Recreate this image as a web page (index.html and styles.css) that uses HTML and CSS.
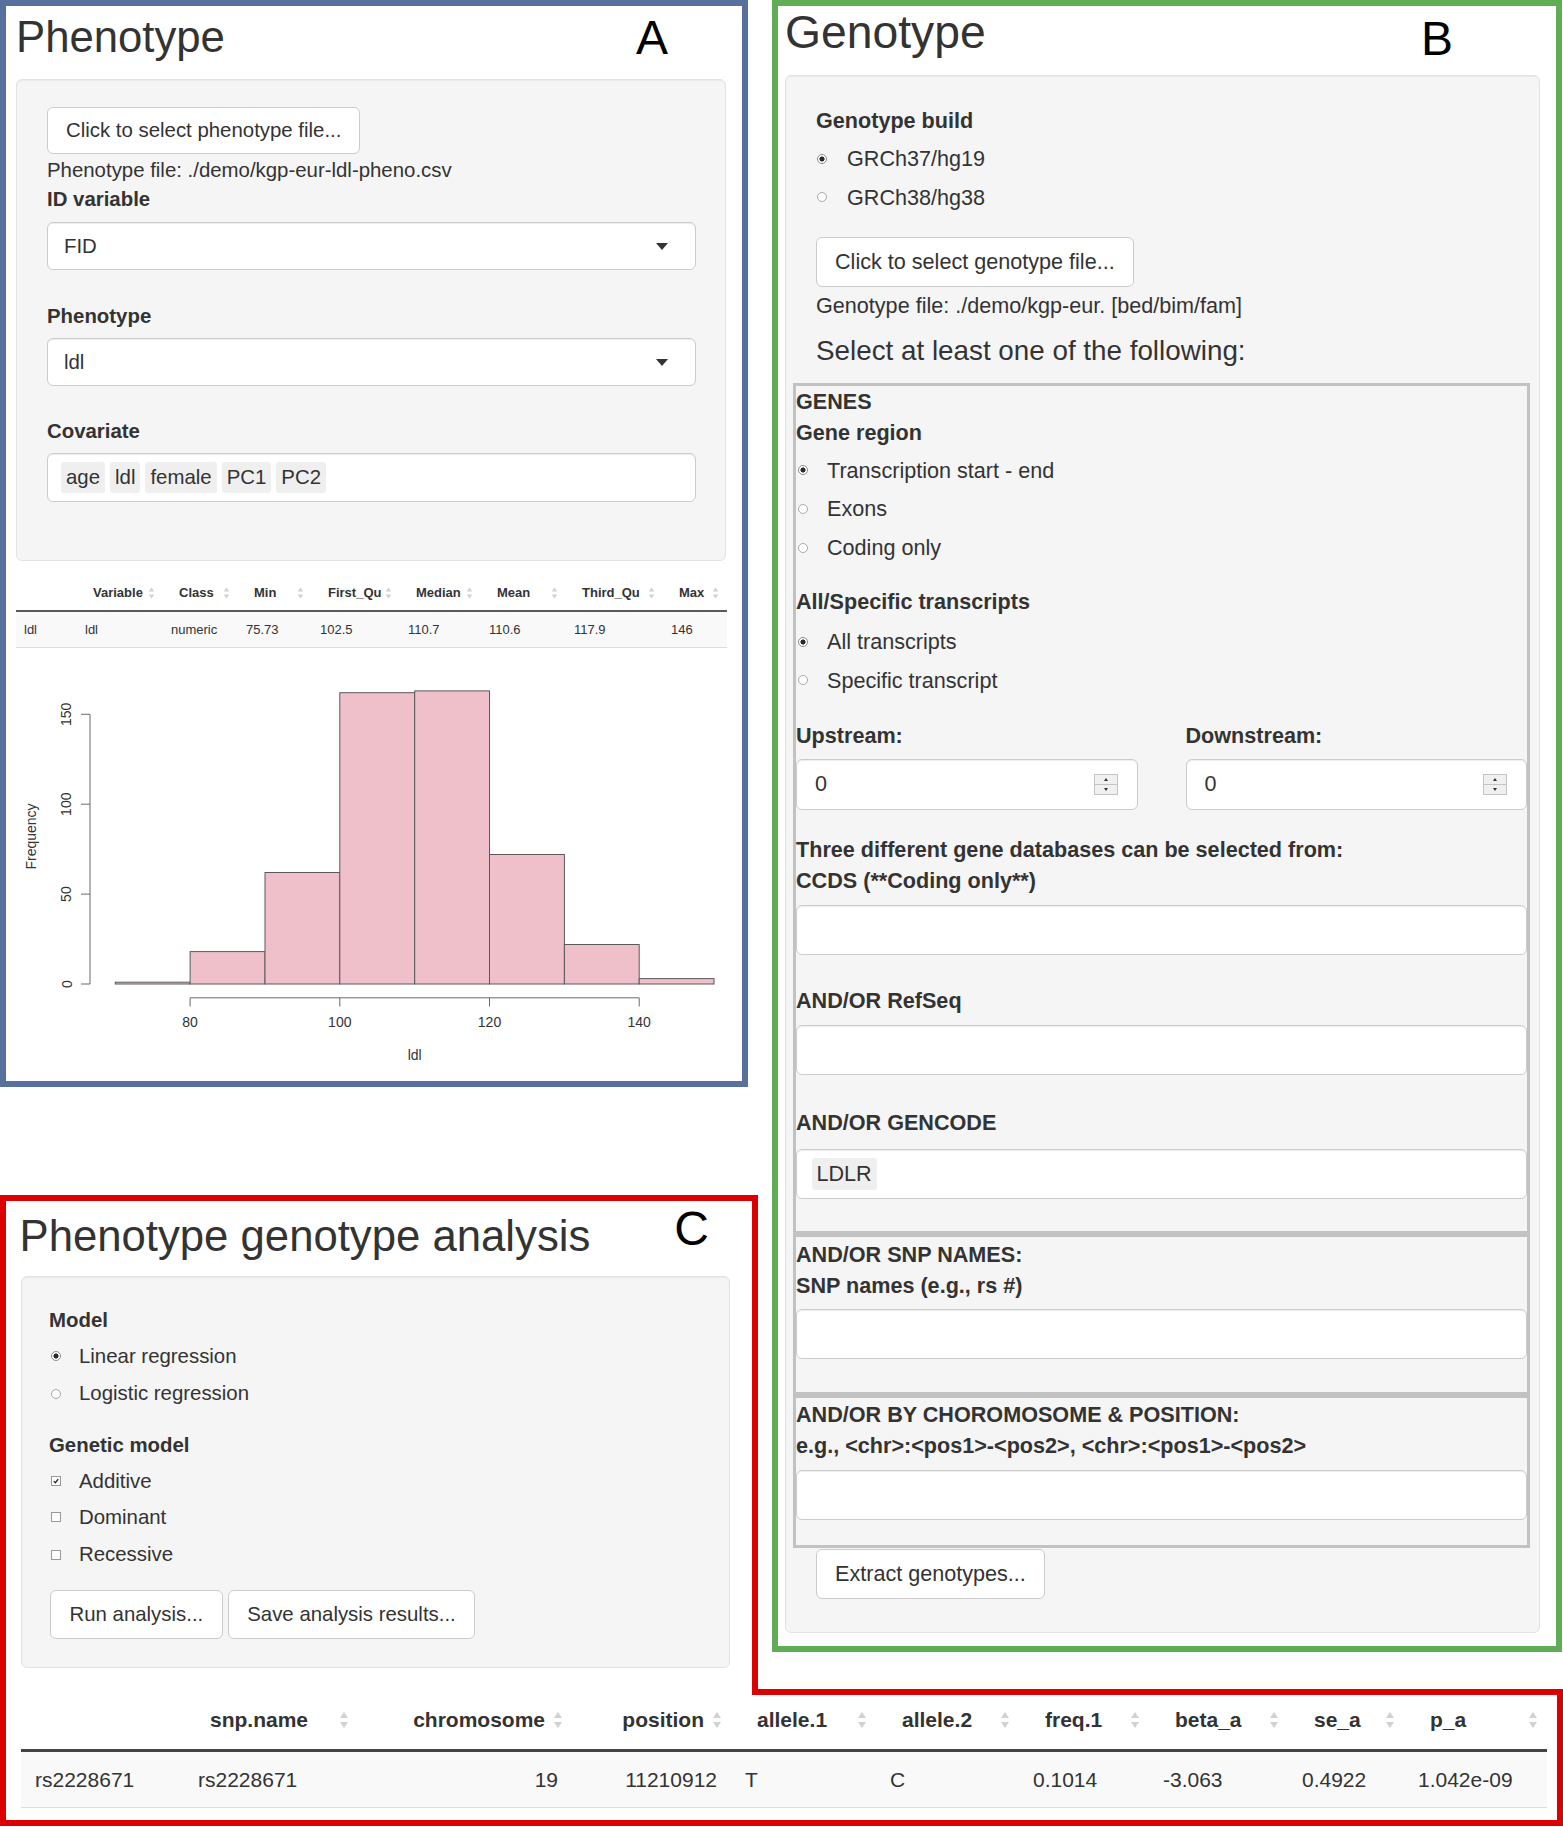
FILE: index.html
```html
<!DOCTYPE html>
<html>
<head>
<meta charset="utf-8">
<title>Phenotype genotype</title>
<link rel="stylesheet" href="styles.css">
</head>
<body>
<div class="page">
  <div class="upper">
    <div class="left-col">
      <section class="panel-a">
        <div class="head">
          <h2 class="title title-a">Phenotype</h2>
          <span class="mark mark-a">A</span>
        </div>
        <div class="well well-a">
          <button class="btn btn-a">Click to select phenotype file...</button>
          <div class="line-a file-a">Phenotype file: ./demo/kgp-eur-ldl-pheno.csv</div>
          <div class="line-a lbl">ID variable</div>
          <div class="select sel-1"><span>FID</span><span class="caret"></span></div>
          <div class="line-a lbl lbl-pheno">Phenotype</div>
          <div class="select sel-2"><span>ldl</span><span class="caret"></span></div>
          <div class="line-a lbl lbl-cov">Covariate</div>
          <div class="selectize">
            <span class="chip">age</span><span class="chip">ldl</span><span class="chip">female</span><span class="chip">PC1</span><span class="chip">PC2</span>
          </div>
        </div>
        <table class="stats">
          <colgroup>
            <col class="sc0"><col class="sc1"><col class="sc2"><col class="sc3"><col class="sc4"><col class="sc5"><col class="sc6"><col class="sc7"><col class="sc8">
          </colgroup>
          <thead>
            <tr>
              <th></th>
              <th><div class="th-in"><span>Variable</span><svg class="sort-a" viewBox="0 0 10 20"><path d="M5 2L9 8H1Z"/><path d="M5 18L9 12H1Z"/></svg></div></th>
              <th><div class="th-in"><span>Class</span><svg class="sort-a" viewBox="0 0 10 20"><path d="M5 2L9 8H1Z"/><path d="M5 18L9 12H1Z"/></svg></div></th>
              <th><div class="th-in"><span>Min</span><svg class="sort-a" viewBox="0 0 10 20"><path d="M5 2L9 8H1Z"/><path d="M5 18L9 12H1Z"/></svg></div></th>
              <th><div class="th-in"><span>First_Qu</span><svg class="sort-a" viewBox="0 0 10 20"><path d="M5 2L9 8H1Z"/><path d="M5 18L9 12H1Z"/></svg></div></th>
              <th><div class="th-in"><span>Median</span><svg class="sort-a" viewBox="0 0 10 20"><path d="M5 2L9 8H1Z"/><path d="M5 18L9 12H1Z"/></svg></div></th>
              <th><div class="th-in"><span>Mean</span><svg class="sort-a" viewBox="0 0 10 20"><path d="M5 2L9 8H1Z"/><path d="M5 18L9 12H1Z"/></svg></div></th>
              <th><div class="th-in"><span>Third_Qu</span><svg class="sort-a" viewBox="0 0 10 20"><path d="M5 2L9 8H1Z"/><path d="M5 18L9 12H1Z"/></svg></div></th>
              <th><div class="th-in"><span>Max</span><svg class="sort-a" viewBox="0 0 10 20"><path d="M5 2L9 8H1Z"/><path d="M5 18L9 12H1Z"/></svg></div></th>
            </tr>
          </thead>
          <tbody>
            <tr><td>ldl</td><td>ldl</td><td>numeric</td><td>75.73</td><td>102.5</td><td>110.7</td><td>110.6</td><td>117.9</td><td>146</td></tr>
          </tbody>
        </table>
        <svg class="hist" width="736" height="432.5" viewBox="6 647.5 736 432.5">
          <g class="bars">
            <rect x="115.3" y="981.7" width="74.8" height="1.8"/>
            <rect x="190.1" y="951.1" width="74.9" height="32.4"/>
            <rect x="265" y="872" width="74.8" height="111.5"/>
            <rect x="339.8" y="692.2" width="74.9" height="291.3"/>
            <rect x="414.7" y="690.4" width="74.8" height="293.1"/>
            <rect x="489.5" y="854" width="74.9" height="129.5"/>
            <rect x="564.4" y="944" width="74.8" height="39.5"/>
            <rect x="639.2" y="978.1" width="74.8" height="5.4"/>
          </g>
          <g class="axis">
            <path d="M90 983.5V713.8M81 983.5H90M81 893.6H90M81 803.7H90M81 713.8H90"/>
            <path d="M190.1 997.3H639.2M190.1 997.3V1006M339.8 997.3V1006M489.5 997.3V1006M639.2 997.3V1006"/>
          </g>
          <g class="labels">
            <text x="71.5" y="983.5" transform="rotate(-90 71.5 983.5)">0</text>
            <text x="71.5" y="893.6" transform="rotate(-90 71.5 893.6)">50</text>
            <text x="71.5" y="803.7" transform="rotate(-90 71.5 803.7)">100</text>
            <text x="71.5" y="713.8" transform="rotate(-90 71.5 713.8)">150</text>
            <text x="36" y="836" transform="rotate(-90 36 836)">Frequency</text>
            <text x="190.1" y="1026">80</text>
            <text x="339.8" y="1026">100</text>
            <text x="489.5" y="1026">120</text>
            <text x="639.2" y="1026">140</text>
            <text x="414.7" y="1059">ldl</text>
          </g>
        </svg>
      </section>

      <section class="panel-c">
        <div class="head">
          <h2 class="title title-c">Phenotype genotype analysis</h2>
          <span class="mark mark-c">C</span>
        </div>
        <div class="well well-c">
          <div class="line-a lbl">Model</div>
          <div class="opt-c opt-c1"><span class="dot on"></span>Linear regression</div>
          <div class="opt-c opt-c2"><span class="dot"></span>Logistic regression</div>
          <div class="line-a lbl lbl-gen">Genetic model</div>
          <div class="opt-c opt-c1"><span class="chk on"><svg viewBox="0 0 10 10"><path d="M2.2 5.2L4.2 7.2L7.8 2.6"/></svg></span>Additive</div>
          <div class="opt-c opt-c1"><span class="chk"></span>Dominant</div>
          <div class="opt-c opt-c2"><span class="chk"></span>Recessive</div>
          <div class="btn-row">
            <button class="btn btn-c">Run analysis...</button>
            <button class="btn btn-c">Save analysis results...</button>
          </div>
        </div>
      </section>
    </div>

    <section class="panel-b">
      <div class="head">
        <h2 class="title title-b">Genotype</h2>
        <span class="mark mark-b">B</span>
      </div>
      <div class="well well-b">
        <div class="line-b lbl">Genotype build</div>
        <div class="opt-b opt-top"><span class="dot on"></span>GRCh37/hg19</div>
        <div class="opt-b opt-top"><span class="dot"></span>GRCh38/hg38</div>
        <button class="btn btn-b btn-geno">Click to select genotype file...</button>
        <div class="line-b file-b">Genotype file: ./demo/kgp-eur. [bed/bim/fam]</div>
        <h4 class="sub">Select at least one of the following:</h4>

        <div class="box box-genes">
          <div class="line-b lbl">GENES</div>
          <div class="line-b lbl">Gene region</div>
          <div class="opt-b opt-in m7"><span class="dot on"></span>Transcription start - end</div>
          <div class="opt-b opt-in m75"><span class="dot"></span>Exons</div>
          <div class="opt-b opt-in m8"><span class="dot"></span>Coding only</div>
          <div class="line-b lbl m23">All/Specific transcripts</div>
          <div class="opt-b opt-in m9"><span class="dot on"></span>All transcripts</div>
          <div class="opt-b opt-in m75"><span class="dot"></span>Specific transcript</div>
          <div class="updown">
            <div>
              <div class="line-b lbl">Upstream:</div>
              <div class="num-input"><span>0</span><span class="spin"><span class="up"></span><span class="down"></span></span></div>
            </div>
            <div>
              <div class="line-b lbl">Downstream:</div>
              <div class="num-input"><span>0</span><span class="spin"><span class="up"></span><span class="down"></span></span></div>
            </div>
          </div>
          <div class="line-b lbl m24">Three different gene databases can be selected from:</div>
          <div class="line-b lbl">CCDS (**Coding only**)</div>
          <div class="text-input ti-ccds"></div>
          <div class="line-b lbl m30">AND/OR RefSeq</div>
          <div class="text-input ti-refseq"></div>
          <div class="line-b lbl m32">AND/OR GENCODE</div>
          <div class="text-input ti-gencode"><span class="chip chip-b">LDLR</span></div>
        </div>

        <div class="box box-snp">
          <div class="line-b lbl">AND/OR SNP NAMES:</div>
          <div class="line-b lbl">SNP names (e.g., rs #)</div>
          <div class="text-input ti-snp"></div>
        </div>

        <div class="box box-chr">
          <div class="line-b lbl">AND/OR BY CHOROMOSOME &amp; POSITION:</div>
          <div class="line-b lbl">e.g., &lt;chr&gt;:&lt;pos1&gt;-&lt;pos2&gt;, &lt;chr&gt;:&lt;pos1&gt;-&lt;pos2&gt;</div>
          <div class="text-input ti-chr"></div>
        </div>

        <button class="btn btn-b btn-extract">Extract genotypes...</button>
      </div>
    </section>
  </div>

  <section class="results">
    <table class="res-table">
      <colgroup>
        <col class="rc0"><col class="rc1"><col class="rc2"><col class="rc3"><col class="rc4"><col class="rc5"><col class="rc6"><col class="rc7"><col class="rc8"><col class="rc9">
      </colgroup>
      <thead>
        <tr>
          <th></th>
          <th><div class="th-in"><span>snp.name</span><svg class="sort-c" viewBox="0 0 10 20"><path d="M5 2L9 8H1Z"/><path d="M5 18L9 12H1Z"/></svg></div></th>
          <th class="num"><div class="th-in th-right"><span>chromosome</span><svg class="sort-c" viewBox="0 0 10 20"><path d="M5 2L9 8H1Z"/><path d="M5 18L9 12H1Z"/></svg></div></th>
          <th class="num"><div class="th-in th-right"><span>position</span><svg class="sort-c" viewBox="0 0 10 20"><path d="M5 2L9 8H1Z"/><path d="M5 18L9 12H1Z"/></svg></div></th>
          <th><div class="th-in"><span>allele.1</span><svg class="sort-c" viewBox="0 0 10 20"><path d="M5 2L9 8H1Z"/><path d="M5 18L9 12H1Z"/></svg></div></th>
          <th><div class="th-in"><span>allele.2</span><svg class="sort-c" viewBox="0 0 10 20"><path d="M5 2L9 8H1Z"/><path d="M5 18L9 12H1Z"/></svg></div></th>
          <th><div class="th-in"><span>freq.1</span><svg class="sort-c" viewBox="0 0 10 20"><path d="M5 2L9 8H1Z"/><path d="M5 18L9 12H1Z"/></svg></div></th>
          <th><div class="th-in"><span>beta_a</span><svg class="sort-c" viewBox="0 0 10 20"><path d="M5 2L9 8H1Z"/><path d="M5 18L9 12H1Z"/></svg></div></th>
          <th><div class="th-in"><span>se_a</span><svg class="sort-c" viewBox="0 0 10 20"><path d="M5 2L9 8H1Z"/><path d="M5 18L9 12H1Z"/></svg></div></th>
          <th><div class="th-in"><span>p_a</span><svg class="sort-c" viewBox="0 0 10 20"><path d="M5 2L9 8H1Z"/><path d="M5 18L9 12H1Z"/></svg></div></th>
        </tr>
      </thead>
      <tbody>
        <tr>
          <td>rs2228671</td><td>rs2228671</td><td class="num">19</td><td class="num">11210912</td><td>T</td><td>C</td><td>0.1014</td><td>-3.063</td><td>0.4922</td><td>1.042e-09</td>
        </tr>
      </tbody>
    </table>
  </section>
</div>
</body>
</html>
```

FILE: styles.css
```css
html, body {
  margin: 0;
  padding: 0;
  background: #ffffff;
}

body {
  font-family: "Liberation Sans", Arial, Helvetica, sans-serif;
  color: #333333;
}

.page {
  width: 1563px;
}

.upper {
  display: flex;
  align-items: flex-start;
}

.left-col {
  width: 758px;
  flex: none;
}

/* ---------- shared ---------- */
.head {
  display: flex;
  align-items: flex-start;
}

.title {
  margin: 0;
  font-weight: normal;
  line-height: 50px;
  white-space: nowrap;
  color: #333333;
}

.mark {
  margin-left: auto;
  font-size: 48px;
  line-height: 30px;
  color: #000000;
}

.well {
  background: #f5f5f5;
  border: 1px solid #e3e3e3;
  border-radius: 6px;
  box-shadow: inset 0 1px 1px rgba(0, 0, 0, 0.05);
}

.btn {
  display: block;
  box-sizing: border-box;
  font: inherit;
  color: #333333;
  background: #ffffff;
  border: 1px solid #cccccc;
  border-radius: 6px;
  padding: 0 18px;
  margin: 0;
  white-space: nowrap;
}

.lbl {
  font-weight: bold;
}

.chip {
  display: inline-block;
  background: #efefef;
  border-radius: 3px;
  padding: 0 5px;
}

.dot {
  flex: none;
  width: 10px;
  height: 10px;
  box-sizing: border-box;
  border-radius: 50%;
  border: 1px solid #a9a9a9;
  background: #ffffff;
}

.dot.on {
  background: radial-gradient(circle, #2a2a2a 0, #2a2a2a 2.2px, #ffffff 2.9px);
  border-color: #8c8c8c;
}

.chk {
  flex: none;
  width: 10px;
  height: 10px;
  box-sizing: border-box;
  border: 1px solid #9a9a9a;
  background: #ffffff;
  display: flex;
}

.chk svg {
  width: 8px;
  height: 8px;
  fill: none;
  stroke: #222222;
  stroke-width: 1.6;
}

.th-in {
  display: flex;
  align-items: center;
  justify-content: space-between;
}

.th-right {
  justify-content: flex-end;
}

.sort-a,
.sort-c {
  flex: none;
  fill: #d2d2d2;
}

/* ---------- panel A ---------- */
.panel-a {
  width: 748px;
  box-sizing: border-box;
  border: 6px solid #57719c;
}

.title-a {
  font-size: 43.7px;
  margin-top: 6px;
  padding-left: 10px;
}

.mark-a {
  margin-top: 17.4px;
  margin-right: 74px;
}

.well-a {
  margin: 16.5px 16px 0 10px;
  padding: 27px 29px 58px 30px;
  font-size: 20.4px;
}

.btn-a {
  height: 47px;
}

.line-a {
  line-height: 29px;
}

.file-a {
  margin-top: 2.5px;
}

.select {
  box-sizing: border-box;
  height: 48px;
  display: flex;
  align-items: center;
  justify-content: space-between;
  padding: 0 27px 0 16px;
  background: #ffffff;
  border: 1px solid #cccccc;
  border-radius: 6px;
  box-shadow: inset 0 1px 1px rgba(0, 0, 0, 0.075);
}

.sel-1 {
  margin-top: 8px;
}

.sel-2 {
  margin-top: 7.5px;
}

.lbl-pheno {
  margin-top: 31.5px;
}

.lbl-cov {
  margin-top: 30.5px;
}

.caret {
  width: 0;
  height: 0;
  border-left: 6.5px solid transparent;
  border-right: 6.5px solid transparent;
  border-top: 7px solid #333333;
}

.selectize {
  box-sizing: border-box;
  height: 49px;
  margin-top: 7.5px;
  display: flex;
  align-items: center;
  gap: 5px;
  padding-left: 13px;
  background: #ffffff;
  border: 1px solid #cccccc;
  border-radius: 6px;
  box-shadow: inset 0 1px 1px rgba(0, 0, 0, 0.075);
}

.selectize .chip {
  height: 31px;
  line-height: 31px;
}

.stats {
  margin: 14px 0 0 10px;
  width: 711px;
  table-layout: fixed;
  border-collapse: separate;
  border-spacing: 0;
  font-size: 13px;
  color: #333333;
}

.sc0 { width: 61px; }
.sc1 { width: 86px; }
.sc2 { width: 75px; }
.sc3 { width: 74px; }
.sc4 { width: 88px; }
.sc5 { width: 81px; }
.sc6 { width: 85px; }
.sc7 { width: 97px; }
.sc8 { width: 64px; }

.stats th {
  height: 35px;
  padding: 0 8px 0 16px;
  text-align: left;
  font-weight: bold;
  border-bottom: 2px solid #5a5a5a;
  white-space: nowrap;
}

.stats td {
  height: 35px;
  padding: 0 0 0 8px;
  background: #f9f9f9;
  border-bottom: 1px solid #dddddd;
  white-space: nowrap;
}

.sort-a {
  width: 7px;
  height: 14px;
}

.hist {
  display: block;
}

.hist .bars rect {
  fill: #efc0ca;
  stroke: #5a5a5a;
  stroke-width: 1;
}

.hist .axis path {
  fill: none;
  stroke: #6a6a6a;
  stroke-width: 1;
}

.hist text {
  font-family: "Liberation Sans", Arial, sans-serif;
  font-size: 14px;
  fill: #333333;
  text-anchor: middle;
}

/* ---------- panel C ---------- */
.panel-c {
  width: 758px;
  box-sizing: border-box;
  margin-top: 108px;
  padding-bottom: 21px;
  border: 6px solid #dc0000;
  border-bottom: 0;
}

.title-c {
  font-size: 43.7px;
  margin-top: 10.5px;
  padding-left: 13.5px;
}

.mark-c {
  margin-top: 13.9px;
  margin-right: 43px;
}

.well-c {
  margin: 15.4px 22px 0 15px;
  padding: 28.5px 27px 28px 27px;
  font-size: 20.4px;
}

.opt-c {
  display: flex;
  align-items: center;
  line-height: 29px;
}

.opt-c .dot,
.opt-c .chk {
  margin-left: 2px;
  margin-right: 18px;
}

.opt-c1 {
  margin-top: 7px;
}

.opt-c2 {
  margin-top: 8.5px;
}

.lbl-gen {
  margin-top: 22.5px;
}

.btn-row {
  display: flex;
  gap: 5px;
  margin-top: 21px;
  margin-left: 1px;
}

.btn-c {
  height: 49px;
  padding: 0 18.5px;
}

/* ---------- panel B ---------- */
.panel-b {
  width: 790px;
  flex: none;
  box-sizing: border-box;
  margin-left: 14px;
  border: 6px solid #61ad56;
  font-size: 21.6px;
}

.title-b {
  font-size: 46.3px;
  margin-top: 1px;
  padding-left: 7px;
}

.mark-b {
  margin-top: 18.4px;
  margin-right: 103px;
}

.well-b {
  margin: 17.5px 16px 13px 7px;
  padding: 29px 30px 32.5px 30px;
}

.line-b {
  line-height: 31px;
}

.opt-b {
  display: flex;
  align-items: center;
  line-height: 31px;
}

.opt-top {
  margin-top: 7.5px;
}

.opt-top .dot {
  margin-left: 1px;
  margin-right: 20px;
}

.opt-in .dot {
  margin-left: 1.5px;
  margin-right: 19.5px;
}

.m7 { margin-top: 7px; }
.m75 { margin-top: 7.5px; }
.m8 { margin-top: 8px; }
.m9 { margin-top: 9px; }
.m23 { margin-top: 23px; }
.m24 { margin-top: 24px; }
.m30 { margin-top: 30px; }
.m32 { margin-top: 32px; }

.btn-b {
  height: 50px;
}

.btn-geno {
  margin-top: 24.5px;
}

.file-b {
  margin-top: 3px;
}

.sub {
  margin: 13px 0 0 0;
  font-size: 27.8px;
  line-height: 34px;
  font-weight: normal;
  white-space: nowrap;
}

.box {
  margin: 0 -21px 0 -23px;
  border: 3px solid #c2c2c2;
  white-space: nowrap;
}

.box-genes {
  margin-top: 14.6px;
  padding-bottom: 32.5px;
}

.box-snp {
  padding-top: 1.5px;
  padding-bottom: 33px;
}

.box-chr {
  padding-top: 0.5px;
  padding-bottom: 25px;
}

.updown {
  display: grid;
  grid-template-columns: 1fr 1fr;
  column-gap: 48px;
  margin-top: 24px;
}

.num-input {
  box-sizing: border-box;
  height: 50.5px;
  margin-top: 8.5px;
  display: flex;
  align-items: center;
  justify-content: space-between;
  padding: 0 19px 0 18px;
  background: #ffffff;
  border: 1px solid #cccccc;
  border-radius: 6px;
  box-shadow: inset 0 1px 1px rgba(0, 0, 0, 0.075);
}

.spin {
  width: 24px;
  height: 21px;
  box-sizing: border-box;
  border: 1px solid #c4c4c4;
  display: flex;
  flex-direction: column;
}

.spin span {
  flex: 1;
  display: flex;
  align-items: center;
  justify-content: center;
  background: #f0f0f0;
}

.spin span + span {
  border-top: 1px solid #c4c4c4;
}

.spin .up::after {
  content: "";
  border-left: 2.5px solid transparent;
  border-right: 2.5px solid transparent;
  border-bottom: 3px solid #333333;
}

.spin .down::after {
  content: "";
  border-left: 2.5px solid transparent;
  border-right: 2.5px solid transparent;
  border-top: 3px solid #333333;
}

.text-input {
  box-sizing: border-box;
  height: 50px;
  display: flex;
  align-items: center;
  padding-left: 14.5px;
  background: #ffffff;
  border: 1px solid #cccccc;
  border-radius: 6px;
  box-shadow: inset 0 1px 1px rgba(0, 0, 0, 0.075);
}

.ti-ccds { margin-top: 9.5px; }
.ti-refseq { margin-top: 9px; }
.ti-gencode { margin-top: 10.5px; }
.ti-snp { margin-top: 8.5px; }
.ti-chr { margin-top: 9.5px; }

.chip-b {
  height: 32px;
  line-height: 32px;
}

.btn-extract {
  margin-top: 1px;
}

/* ---------- results table (C bottom) ---------- */
.results {
  border: 6px solid #dc0000;
  border-top: 0;
  padding-bottom: 12px;
}

.results::before {
  content: "";
  display: block;
  margin-left: 746px;
  margin-right: -6px;
  border-top: 6px solid #dc0000;
}

.res-table {
  margin-left: 15px;
  width: 1526px;
  table-layout: fixed;
  border-collapse: separate;
  border-spacing: 0;
  font-size: 21px;
  color: #333333;
}

.rc0 { width: 163px; }
.rc1 { width: 174px; }
.rc2 { width: 214px; }
.rc3 { width: 159px; }
.rc4 { width: 145px; }
.rc5 { width: 143px; }
.rc6 { width: 130px; }
.rc7 { width: 139px; }
.rc8 { width: 116px; }
.rc9 { width: 143px; }

.res-table th {
  height: 54px;
  padding: 0 9px 0 26px;
  text-align: left;
  font-weight: bold;
  border-bottom: 3px solid #444444;
  white-space: nowrap;
}

.res-table .th-in {
  margin-bottom: 4px;
}

.res-table th.num {
  padding-left: 9px;
}

.res-table .th-right svg {
  margin-left: 8px;
}

.res-table td {
  height: 55px;
  padding: 0 14px;
  background: #f9f9f9;
  border-bottom: 1px solid #dddddd;
  white-space: nowrap;
}

.res-table td.num {
  text-align: right;
}

.sort-c {
  width: 10px;
  height: 20px;
}
```
